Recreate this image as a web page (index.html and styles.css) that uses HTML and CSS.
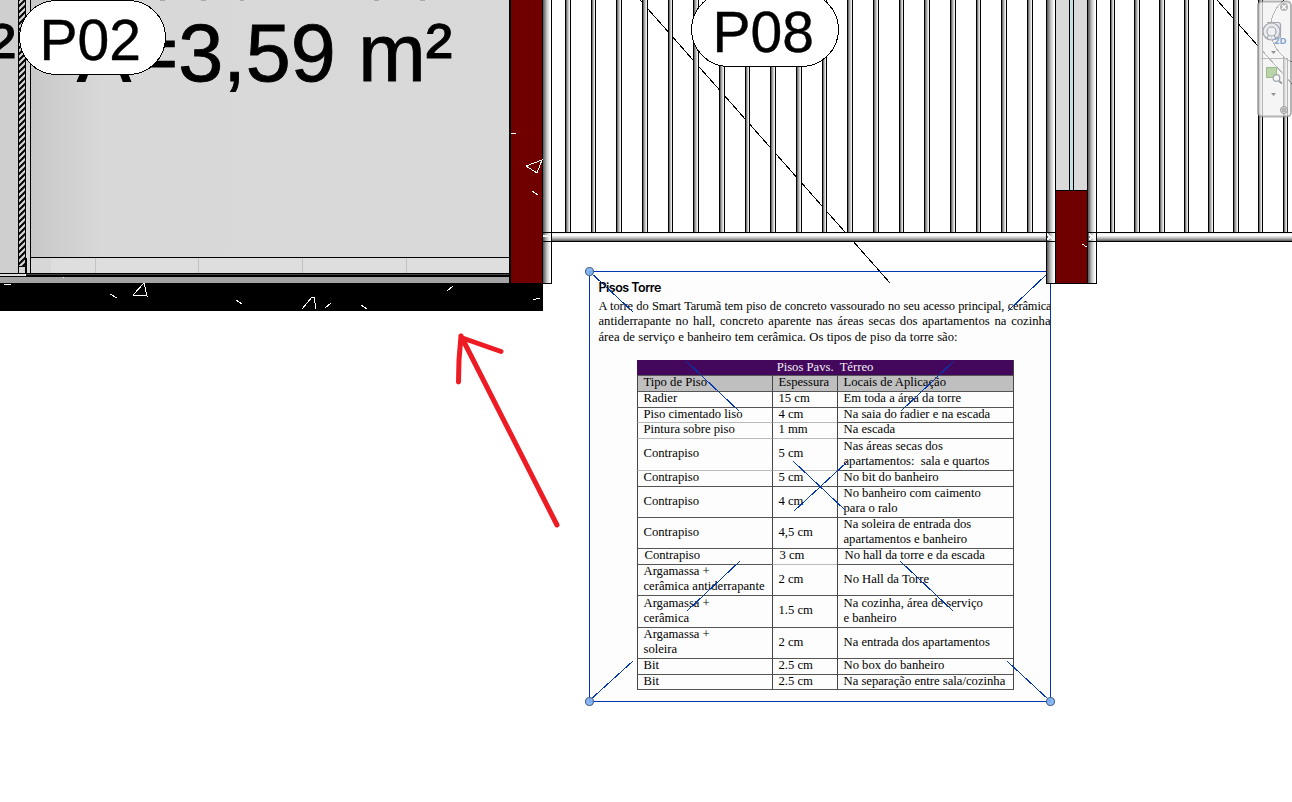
FILE: index.html
```html
<!DOCTYPE html>
<html lang="pt-BR">
<head>
<meta charset="utf-8">
<title>Planta - Pisos Torre</title>
<link rel="stylesheet" href="styles.css">
</head>
<body>
<main class="canvas">
  <section class="sheet">
    <h1>Pisos Torre</h1>
    <p class="line line-first">A torre do Smart Tarumã tem piso de concreto vassourado no seu acesso principal, cerâmica</p>
    <p class="line">antiderrapante no hall, concreto aparente nas áreas secas dos apartamentos na cozinha</p>
    <p class="line line-last">área de serviço e banheiro tem cerâmica. Os tipos de piso da torre são:</p>
    <div class="floors">
      <div class="title">Pisos Pavs.&nbsp; Térreo</div>
      <div class="head">Tipo de Piso</div><div class="head">Espessura</div><div class="head">Locais de Aplicação</div>
      <div>Radier</div><div>15 cm</div><div>Em toda a área da torre</div>
      <div>Piso cimentado liso</div><div>4 cm</div><div>Na saia do radier e na escada</div>
      <div class="faint">Pintura sobre piso</div><div class="faint">1 mm</div><div>Na escada</div>
      <div class="faint">Contrapiso</div><div class="faint">5 cm</div><div>Nas áreas secas dos<br>apartamentos:&nbsp; sala e quartos</div>
      <div class="faint">Contrapiso</div><div class="faint">5 cm</div><div>No bit do banheiro</div>
      <div>Contrapiso</div><div>4 cm</div><div>No banheiro com caimento<br>para o ralo</div>
      <div>Contrapiso</div><div>4,5 cm</div><div>Na soleira de entrada dos<br>apartamentos e banheiro</div>
      <div class="nudge">Contrapiso</div><div class="nudge">3 cm</div><div class="nudge">No hall da torre e da escada</div>
      <div>Argamassa +<br>cerâmica antiderrapante</div><div class="faint">2 cm</div><div>No Hall da Torre</div>
      <div>Argamassa +<br>cerâmica</div><div>1.5 cm</div><div>Na cozinha, área de serviço<br>e banheiro</div>
      <div>Argamassa +<br>soleira</div><div>2 cm</div><div>Na entrada dos apartamentos</div>
      <div>Bit</div><div>2.5 cm</div><div>No box do banheiro</div>
      <div>Bit</div><div>2.5 cm</div><div>Na separação entre sala/cozinha</div>
    </div>
  </section>

  <svg class="plan" width="1292" height="802" viewBox="0 0 1292 802">
    <defs>
      <linearGradient id="bar"><stop offset="0" stop-color="#555"/><stop offset=".45" stop-color="#b5b5b5"/><stop offset="1" stop-color="#fff"/></linearGradient>
      <linearGradient id="post"><stop offset="0" stop-color="#555"/><stop offset=".5" stop-color="#c8c8c8"/><stop offset=".9" stop-color="#fff"/></linearGradient>
      <linearGradient id="rail" x2="0" y2="1"><stop offset="0" stop-color="#eee"/><stop offset=".3" stop-color="#fff"/><stop offset=".65" stop-color="#bbb"/><stop offset="1" stop-color="#555"/></linearGradient>
      <linearGradient id="floor"><stop offset="0" stop-color="#c8c8c8"/><stop offset=".15" stop-color="#d8d8d8"/><stop offset="1" stop-color="#d9d9d9"/></linearGradient>
      <pattern id="hatch" x="19" width="6" height="6" patternUnits="userSpaceOnUse"><path d="M-1 7L7 -1M-1 1L1-1M5 7L7 5" stroke="#000" stroke-width="2"/></pattern>
      <g id="b"><rect width="6" height="232"/><rect x="1" width="4" height="232" fill="url(#bar)"/></g>
      <g id="n"><rect width="5" height="232"/><rect x="1" width="3" height="232" fill="url(#bar)"/></g>
    </defs>

    <g class="crisp">
      <path fill="#cfcfcf" d="M0 0h18v273H0z"/>
      <path fill="#d6d6d6" d="M18 0h13v273H18z"/>
      <path fill="url(#floor)" d="M31 0h478v257H31z"/>
      <path fill="#dedede" d="M31 258h478v15H31z"/>
      <path fill="#cfcfcf" d="M31 258h20v15H31z" opacity=".5"/>
      <path fill="url(#hatch)" d="M19 0h6v266h-6z"/>
      <path d="M18 0h1v273h-1zM25 0h1v273h-1zM30 0h1v273h-1zM18 266h8v1h-8zM26 258h1v16h-1zM31 257h478v1H31zM0 273h509v1H0z"/>
      <path fill="#c2c2c2" d="M95 258h1v15h-1zM198 258h1v15h-1zM302 258h1v15h-1zM406 258h1v15h-1z"/>
      <path fill="#ddd" d="M0 274h25v2H0z"/>
      <path fill="#444" d="M26 274h484v1H26z"/>
      <path d="M0 276h26v1H0zM26 275h484v2H26z"/>
      <path fill="#a5a3a5" d="M0 277h509v6H0z"/>
      <path d="M0 283h543v28H0zM509 0h2v283h-2zM542 0h1v283h-1z"/>
      <path fill="#700000" d="M511 0h31v283h-31z"/>
      <path fill="none" stroke="#fff" d="M4 284.500h7M110 294l7 4M133 295l11-12 3 13zM236 300l6 4M63 277.500h1M302 309l10-12 2 0 2 12M325 308l6-5M361 305l6 4M447 291l6-5M533 299.500l7-1M511 133.500h5M526 166l16-6-5 13zM532 191l6 4"/>
      <path fill="#aaa" d="M160 0h5v1h-5zM201 0h5v1h-5zM240 0h4v1h-4zM374 0h5v1h-5zM420 0h5v1h-5z"/>
    </g>
    <text class="room" x="77" y="80.500" textLength="375.500" lengthAdjust="spacingAndGlyphs">A=3,59 m²</text>
    <text class="room" x="-11.500" y="80.500">²</text>

    <g class="crisp">
      <path fill="none" stroke="#000" d="M640 0L890 283M1217 0L1292 84"/>
      <use href="#b" x="565"/><use href="#n" x="591"/><use href="#b" x="616"/><use href="#b" x="642"/><use href="#n" x="668"/><use href="#b" x="693"/><use href="#b" x="719"/><use href="#n" x="745"/><use href="#b" x="770"/><use href="#b" x="796"/><use href="#n" x="822"/><use href="#b" x="847"/><use href="#b" x="873"/><use href="#n" x="899"/><use href="#b" x="924"/><use href="#b" x="950"/><use href="#n" x="976"/><use href="#b" x="1001"/><use href="#b" x="1027"/>
      <use href="#n" x="1110"/><use href="#b" x="1134"/><use href="#b" x="1159"/><use href="#n" x="1184"/><use href="#b" x="1208"/><use href="#b" x="1233"/><use href="#n" x="1258"/><use href="#n" x="1283"/>
      <path d="M543 232h749v10H543z"/>
      <path fill="url(#rail)" d="M543 233h749v8H543z"/>
      <path fill="#dadada" d="M1056 0h31v190h-31z"/>
      <path fill="#c5e1e6" d="M1070 0h3v190h-3z"/>
      <path d="M1069 0h1v190h-1zM1073 0h1v190h-1z"/>
      <path fill="#700000" stroke="#000" d="M1055.500 190.500h32v93h-32z"/>
      <path fill="url(#post)" d="M543 0h8v283h-8z"/>
      <path fill="url(#post)" d="M1047 0h8v283h-8z"/>
      <path fill="url(#post)" d="M1088 0h8v283h-8z"/>
      <path fill="none" stroke="#000" d="M543 283.500h8.500V0M1046.500 0v283.500h9V0M1087.500 0v283.500h9V0M543 232.500h8M543 241.500h8M1047 232.500h8M1047 241.500h8M1088 232.500h8M1088 241.500h8"/>
      <path fill="none" stroke="#f5f5f5" stroke-width="2" d="M543 236h8M1047 234l7 6M1047 240l3-3M1089 234l7 6M1089 240l6-6"/>
      <path fill="none" stroke="#fff" d="M1082 244l5 3"/>
      <g fill="#fff" stroke="#000"><rect x="19.500" y=".5" width="146" height="74" rx="37"/><rect x="691.500" y="-7.500" width="147" height="74" rx="37"/><rect x="1270.500" y="-8.500" width="147" height="74" rx="37"/></g>
    </g>
    <text class="tag" x="39.500" y="59.500">P02</text>
    <text class="tag" x="712.500" y="51.500">P08</text>

    <g class="crisp" fill="none" stroke="#0037b0">
      <path d="M1046 271.500H589.500v430h461V284"/>
      <path d="M589 271L633 312M686 361L739 411M793 461L845 510M900 561L953 611M1007 661L1050 701M1046 275L1008 311M954 361L901 411M847 462L794 511M740 561L687 611M633 661L589 701"/>
    </g>
    <g fill="#7db1f2" fill-opacity=".9" stroke="#4d678c" stroke-width="1.200"><circle cx="589.500" cy="271.500" r="4"/><circle cx="589.500" cy="701.500" r="4"/><circle cx="1050.500" cy="701.500" r="4"/></g>
    <path class="arrow" d="M557 525L461 336M461 336L459 360 458.500 382M461 337.500L501 351.500"/>
  </svg>

  <aside class="navbar">
    <svg width="35" height="118" viewBox="1257 0 35 118">
      <rect x="1258" y="1.500" width="33" height="115" rx="4" fill="#f2f2f2" fill-opacity=".75" stroke="#858585" stroke-opacity=".6" stroke-width="2"/>
      <circle cx="1284" cy="7" r="4" fill="#b5b5b5"/><path d="M1282 5l4 4M1286 5l-4 4" stroke="#fff" stroke-width="1.300"/>
      <g fill="#e5e8ee" fill-opacity=".7" stroke="#a3a7ad" stroke-width="1.200"><path d="M1267 22.500h11q2.500 0 2.500 2.500v11q0 2-2 2h-4"/><circle cx="1271.500" cy="31.500" r="8.500"/><circle cx="1271.500" cy="31.500" r="4.500" fill="#f4f4f4"/><path d="M1269 35l-3 4M1274 35l2 4"/></g>
      <text class="mode" x="1274" y="44">2D</text>
      <path d="M1271 51h5l-2.500 3zM1271 93h5l-2.500 3z" fill="#8d9299"/>
      <path d="M1261 58.500h27" stroke="#bbb"/>
      <path d="M1266.500 67.500h10v10h-10z" fill="#b9d4a9" stroke="#9dbb8b"/>
      <path d="M1279 81l3 2.500" stroke="#999" stroke-width="1.800"/><circle cx="1276.500" cy="78" r="3.300" fill="#f5f7f8" stroke="#a0a5a9" stroke-width="1.200"/>
      <circle cx="1284" cy="110" r="3.500" fill="#ddd" stroke="#999"/><path d="M1282 109h4M1282 111h4" stroke="#777" stroke-width=".8"/>
    </svg>
  </aside>
</main>
</body>
</html>
```
FILE: styles.css
```css
body { margin: 0; background: #fff; }
.canvas { position: relative; width: 1292px; height: 802px; overflow: hidden; background: #fff; }
.plan { position: absolute; left: 0; top: 0; }
.crisp { shape-rendering: crispEdges; }
.room { font: 81.5px "Liberation Sans", Arial, sans-serif; stroke: #000; stroke-width: 0.9px; }
.tag { font: 57px "Liberation Sans", Arial, sans-serif; stroke: #000; stroke-width: 0.4px; }
.arrow { fill: none; stroke: #ed1c24; stroke-width: 5; stroke-linecap: round; stroke-linejoin: round; }
.navbar { position: absolute; right: 0; top: 0; width: 35px; height: 118px; }
.navbar svg { display: block; }
.mode { font: bold 9.5px "Open Sans", sans-serif; fill: #7fa5cf; }

.sheet {
  position: absolute; left: 589px; top: 271px;
  box-sizing: border-box; width: 462px; height: 431px;
  padding: 9px 0 0 9.5px; overflow: hidden;
  background: #fdfdfd; color: #000;
  font: 12.65px/15px "Liberation Serif", "Times New Roman", serif;
}
.sheet h1 { margin: 0 0 4px; font: 600 12.5px/15px Inter, sans-serif; letter-spacing: -0.5px; color: #000; }
.line { margin: 0; width: 452px; height: 15.4px; text-align-last: justify; white-space: nowrap; }
.line-first { width: 453px; font-size: 12.4px; letter-spacing: -0.11px; }
.line-last { width: 359px; }
.floors {
  display: grid; box-sizing: border-box; width: 377px; margin: 15px 0 0 38px;
  grid-template-columns: 135px 65px 176px;
  grid-template-rows: 15px 16px 16px 15px 16px 32px 16px 31px 31px 16px 31px 32px 31px 16px 15px;
  border-right: 1px solid #444; border-bottom: 1px solid #555;
}
.floors > div {
  box-sizing: border-box; padding: 0 0 1.4px 6px;
  display: flex; align-items: center;
  border-left: 1px solid #444; border-top: 1px solid #555;
  white-space: nowrap;
}
.floors > .title { grid-column: 1 / -1; justify-content: center; padding: 0 0 1.4px; background: #43085c; border-color: #43085c; color: #f3eef5; }
.floors > .head { background: #bfbfbf; }
.floors > .faint { border-top-color: #bbb; }
.floors > .nudge { padding-left: 7px; }
```
